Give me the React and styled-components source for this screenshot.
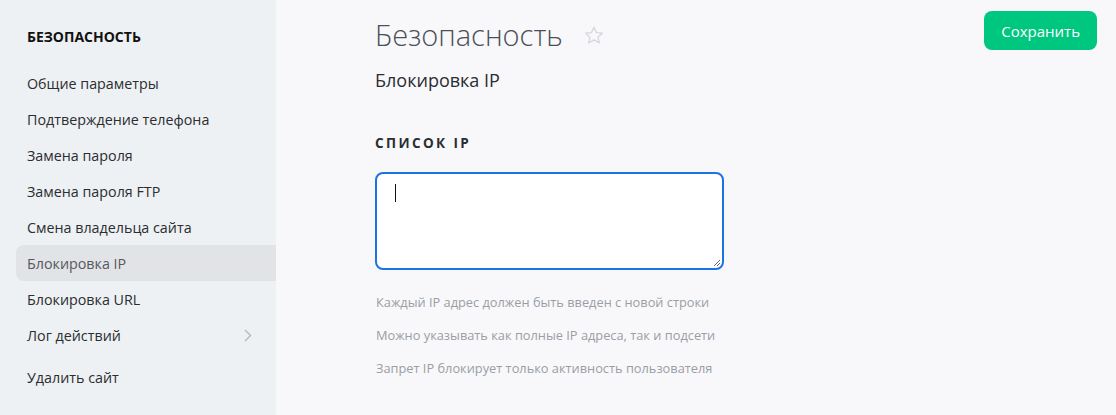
import React from 'react';
import styled, { createGlobalStyle } from 'styled-components';

const GlobalStyle = createGlobalStyle`
    html, body {
        margin: 0;
        padding: 0;
        background: #f8f8fb;
    }
    body {
        font-family: "Open Sans", "Noto Sans", sans-serif;
        color: #2a2d31;
    }
`;

const Page = styled.div`
    display: flex;
    width: 1116px;
    height: 415px;
    overflow: hidden;
`;

const Sidebar = styled.aside`
    width: 276px;
    flex-shrink: 0;
    background: #eef1f3;
    padding: 28px 0 0 16px;
    box-sizing: border-box;

    h4 {
        margin: 0 0 19px 11px;
        font-size: 14px;
        font-weight: 700;
        line-height: 18px;
        color: #111;
    }
`;

const NavItem = styled.div`
    display: flex;
    align-items: center;
    justify-content: space-between;
    height: 36px;
    padding: 0 24px 0 11px;
    margin-top: ${p => (p.$gap ? '6px' : '0')};
    font-size: 14.3px;
    color: ${p => (p.$active ? '#55595e' : '#2a2d31')};
    background: ${p => (p.$active ? '#e1e3e6' : 'transparent')};
    border-radius: 8px 0 0 8px;
`;

const Main = styled.main`
    flex: 1;
    display: flex;
    justify-content: space-between;
    padding: 0 19px 0 99px;
`;

const Content = styled.div`
    display: flex;
    flex-direction: column;
`;

const TitleRow = styled.div`
    display: flex;
    align-items: center;
    gap: 20px;
    margin-top: 15px;

    h1 {
        margin: 0;
        font-size: 29px;
        font-weight: 300;
        line-height: 40px;
        color: #4a5058;
    }
`;

const Subtitle = styled.h2`
    margin: 13px 0 0;
    font-size: 18px;
    font-weight: 400;
    line-height: 24px;
    color: #2a2d31;
`;

const Label = styled.div`
    margin-top: 42px;
    font-size: 13.5px;
    font-weight: 700;
    letter-spacing: 2.4px;
    line-height: 18px;
    color: #2a2d31;
`;

const Field = styled.div`
    margin-top: 20px;
    width: 349px;
    height: 98px;
    box-sizing: border-box;
    border: 2px solid #1c74e4;
    border-radius: 8px;
    background: #fff;
    position: relative;
`;

const Caret = styled.span`
    position: absolute;
    left: 18px;
    top: 10px;
    width: 1px;
    height: 18px;
    background: #111;
`;

const Grip = styled.svg`
    position: absolute;
    right: 1px;
    bottom: 1px;
`;

const Hints = styled.div`
    margin-top: 23px;
    display: flex;
    flex-direction: column;
    gap: 15px;
    padding-left: 1px;

    span {
        font-size: 12.8px;
        line-height: 18px;
        color: #9a9ea4;
    }
`;

const SaveButton = styled.button`
    margin-top: 11px;
    height: 39px;
    padding: 0 17px;
    border: none;
    border-radius: 8px;
    background: #00c77f;
    color: #fff;
    font-family: inherit;
    font-size: 15px;
`;

const items = [
    'Общие параметры',
    'Подтверждение телефона',
    'Замена пароля',
    'Замена пароля FTP',
    'Смена владельца сайта',
    'Блокировка IP',
    'Блокировка URL',
];

const App = () => {
    return (
        <>
            <GlobalStyle />
            <Page>
                <Sidebar>
                    <h4>БЕЗОПАСНОСТЬ</h4>
                    {items.map(t => (
                        <NavItem key={t} $active={t === 'Блокировка IP'}>{t}</NavItem>
                    ))}
                    <NavItem>
                        Лог действий
                        <svg width="8" height="13" viewBox="0 0 8 13">
                            <path d="M1 1l5.5 5.5L1 12" fill="none" stroke="#b3b7bc" strokeWidth="1.3" />
                        </svg>
                    </NavItem>
                    <NavItem $gap>Удалить сайт</NavItem>
                </Sidebar>
                <Main>
                    <Content>
                        <TitleRow>
                            <h1>Безопасность</h1>
                            <svg width="22" height="21" viewBox="0 0 24 24">
                                <path d="M12 2.5l2.9 6.2 6.6.7-4.9 4.5 1.4 6.6L12 17.1l-6 3.4 1.4-6.6-4.9-4.5 6.6-.7z" fill="none" stroke="#d5d8de" strokeWidth="1.6" strokeLinejoin="round" />
                            </svg>
                        </TitleRow>
                        <Subtitle>Блокировка IP</Subtitle>
                        <Label>СПИСОК IP</Label>
                        <Field>
                            <Caret />
                            <Grip width="9" height="9" viewBox="0 0 9 9">
                                <path d="M8 2L2 8M8 5L5 8" stroke="#666" strokeWidth="1" />
                            </Grip>
                        </Field>
                        <Hints>
                            <span>Каждый IP адрес должен быть введен с новой строки</span>
                            <span>Можно указывать как полные IP адреса, так и подсети</span>
                            <span>Запрет IP блокирует только активность пользователя</span>
                        </Hints>
                    </Content>
                    <div>
                        <SaveButton>Сохранить</SaveButton>
                    </div>
                </Main>
            </Page>
        </>
    );
};

export default App;
